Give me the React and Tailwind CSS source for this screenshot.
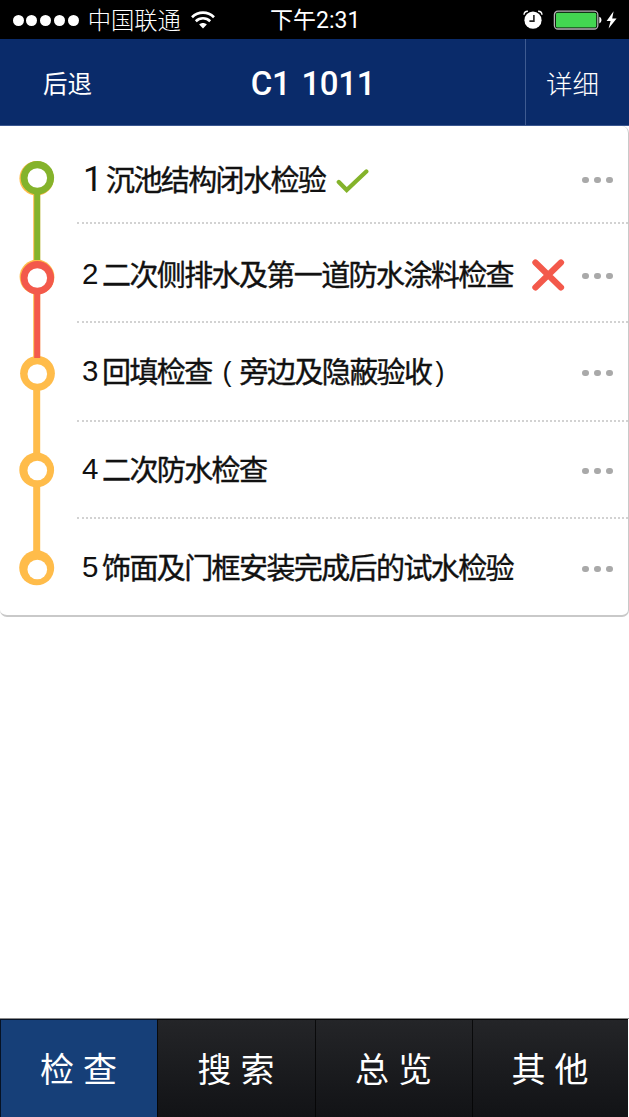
import clsx from 'clsx'

const steps = [
  { no: 1, parts: ['沉池结构闭水检验'], state: 'pass', height: 'h-[97.5px]' },
  { no: 2, parts: ['二次侧排水及第一道防水涂料检查'], state: 'fail', height: 'h-[99px]' },
  { no: 3, parts: ['回填检查', '旁边及隐蔽验收'], height: 'h-[99px]' },
  { no: 4, parts: ['二次防水检查'], height: 'h-[97px]' },
  { no: 5, parts: ['饰面及门框安装完成后的试水检验'], height: 'h-[97.5px]' },
]

const tabs = [
  { name: '检查', active: true, width: 'w-[157px]' },
  { name: '搜索', width: 'w-[158px]' },
  { name: '总览', width: 'w-[157px]' },
  { name: '其他', width: 'w-[156px]' },
]

// ── icons ─────────────────────────────────────────────────────────────────────
function WifiIcon() {
  return (
    <svg className="ml-[10px] mt-px h-[18px] w-[24px]" viewBox="0 0 24 18" fill="none" stroke="#fff">
      <path d="M1 6.2C7.3.2 16.7.2 23 6.2" strokeWidth="2.7" />
      <path d="M4.8 10.2c4.1-3.9 10.3-3.9 14.4 0" strokeWidth="2.6" />
      <path d="M12 17.4l-3.8-3.8c2.1-2 5.5-2 7.6 0z" fill="#fff" stroke="none" />
    </svg>
  )
}

function AlarmIcon() {
  return (
    <svg className="h-[19px] w-[20px]" viewBox="0 0 20 19">
      <circle cx="10" cy="10.2" r="8.6" fill="#fff" />
      <path d="M1 4.7C1.2 2.6 2.8 1.2 4.9 1.3M19 4.7c-.2-2.1-1.8-3.5-3.9-3.4" fill="none" stroke="#fff" strokeWidth="1.4" />
      <path d="M10.9 5v6.1H6.4" fill="none" stroke="#222" strokeWidth="1.6" />
    </svg>
  )
}

function BatteryIcon() {
  return (
    <svg className="ml-[10px] h-[20px] w-[50px]" viewBox="0 0 50 20">
      <rect x="1.4" y="1.2" width="43.4" height="17.8" rx="3.5" fill="#000" stroke="#b5b5b5" strokeWidth="1.3" />
      <rect x="2.9" y="2.8" width="40.4" height="14.6" rx="1.5" fill="#43d651" />
      <path d="M46.3 6.8c2.9.8 2.9 5.8 0 6.6z" fill="#fff" />
    </svg>
  )
}

function BoltIcon() {
  return (
    <svg className="ml-[3px] h-[18px] w-[11px]" viewBox="0 0 11 18">
      <path d="M7.6.3.6 10h4L2.6 17.6 10.6 7.4H6.2z" fill="#fff" />
    </svg>
  )
}

function StateIcon({ state }) {
  if (state === 'pass') {
    return (
      <svg className="mt-[4px] ml-[11px] h-[26px] w-[34px]" viewBox="0 0 34 26">
        <path d="M2.8 14l7.9 8L30.3 3.5" fill="none" stroke="#84b32b" strokeWidth="4.3" strokeLinecap="round" />
      </svg>
    )
  }
  if (state === 'fail') {
    return (
      <svg className="mt-px ml-[18px] h-[32px] w-[34px]" viewBox="0 0 34 32">
        <path d="M4.4 3.6l25.6 24.8M30 3.6L4.4 28.4" fill="none" stroke="#f3594b" strokeWidth="6.2" strokeLinecap="round" />
      </svg>
    )
  }
  return null
}

// ── timeline ──────────────────────────────────────────────────────────────────
function Timeline() {
  return (
    <svg className="h-[490px] w-[77px] shrink-0" viewBox="0 0 77 490">
      {/* amber base line */}
      <path d="M36.7 52v390" stroke="#ffbc4a" strokeWidth="7" />
      <g fill="#ffbc4a">
        <circle cx="36.6" cy="52.3" r="17.2" />
        <circle cx="37" cy="151" r="17.4" />
        <circle cx="37.5" cy="247.3" r="17.4" />
        <circle cx="36.7" cy="344" r="17.4" />
        <circle cx="36.7" cy="441.8" r="17.5" />
      </g>
      {/* finished part */}
      <path d="M37.2 52v82" stroke="#84b32b" strokeWidth="6" />
      <path d="M37.2 152v80" stroke="#f3594b" strokeWidth="6" />
      <circle cx="37.4" cy="51.8" r="16.7" fill="#84b32b" />
      <circle cx="37.4" cy="151.8" r="16.7" fill="#f3594b" />
      <g fill="#fff">
        <circle cx="37.3" cy="52" r="9.8" />
        <circle cx="37.3" cy="152" r="9.8" />
        <circle cx="37.3" cy="248" r="9.8" />
        <circle cx="37.3" cy="344.5" r="9.8" />
        <circle cx="37.3" cy="443.5" r="9.8" />
      </g>
    </svg>
  )
}

function MoreDots() {
  return (
    <button className="mr-[15px] ml-auto flex gap-[5px] pt-[3px]">
      <span className="h-[6px] w-[7px] rounded-full bg-[#a9a9a9]" />
      <span className="h-[6px] w-[7px] rounded-full bg-[#a9a9a9]" />
      <span className="h-[6px] w-[7px] rounded-full bg-[#a9a9a9]" />
    </button>
  )
}

function StepText({ children }) {
  return <span className="pt-[5px] text-[29px] tracking-[-1.6px] [-webkit-text-stroke:0.4px_#111]">{children}</span>
}

function StepRow({ step, last }) {
  const [name, note] = step.parts
  return (
    <li
      className={clsx(
        'flex items-center whitespace-nowrap',
        step.height,
        step.no === 1 && 'pt-[10px]',
        step.no === 2 && 'pt-[4px]',
        !last && 'border-b-2 border-dotted border-[#d2d2d2]',
      )}
    >
      {step.no === 1 ? (
        <span className="w-[29px] shrink-0 pt-[2px] pl-[6px] font-['Roboto'] text-[35px]">1</span>
      ) : (
        <span className="w-[25px] shrink-0 pl-[5px] text-[29.5px]">{step.no}</span>
      )}
      <StepText>{name}</StepText>
      {note && (
        <>
          <span className="ml-[11px] w-[17px] pt-[2px] text-[27px]">(</span>
          <StepText>{note}</StepText>
          <span className="ml-[4px] pt-[2px] text-[27px]">)</span>
        </>
      )}
      <StateIcon state={step.state} />
      <MoreDots />
    </li>
  )
}

// ── page ──────────────────────────────────────────────────────────────────────
export default function App() {
  return (
    <div className="flex h-[1117px] w-[629px] flex-col overflow-hidden bg-white font-['Liberation_Sans','Noto_Sans_CJK_SC',sans-serif] text-[#111]">
      {/* Status bar */}
      <div className="grid h-[39px] shrink-0 grid-cols-[259px_113px_1fr] items-center bg-black text-white">
        <div className="flex items-center pl-[12.5px]">
          <div className="flex gap-[2.8px] pt-[2px]">
            {[1, 2, 3, 4, 5].map(i => <span key={i} className="size-[11px] rounded-full bg-white" />)}
          </div>
          <span className="ml-[9px] pt-[5px] text-[23.3px] leading-none font-light whitespace-nowrap">中国联通</span>
          <WifiIcon />
        </div>
        <div className="pt-[4px] pl-[11px] font-['Roboto','Noto_Sans_CJK_SC',sans-serif] text-[23px] whitespace-nowrap">下午2:31</div>
        <div className="flex items-center justify-end pr-[12px]">
          <AlarmIcon />
          <BatteryIcon />
          <BoltIcon />
        </div>
      </div>

      {/* Nav bar */}
      <header className="grid h-[87px] shrink-0 grid-cols-[104px_1fr_104px] border-b border-[#3b5790] bg-[#0a2b6a] text-white">
        <button className="pt-[6px] pl-[31px] text-[24.5px]">后退</button>
        <h1 className="flex items-center justify-center pt-[3px] pr-[3px] font-['Roboto'] text-[33px] font-medium tracking-[-0.3px] [word-spacing:3px]">
          C1 1011
        </h1>
        <button className="border-l border-[#3f5b91] pt-[7px] pr-[10px] text-[26.5px] font-light">详细</button>
      </header>

      {/* Steps */}
      <main className="flex-1">
        <section className="flex h-[491px] w-full rounded-[7px] border-r border-b-2 border-[#c9c9c9] bg-white">
          <Timeline />
          <ol className="flex-1">
            {steps.map((s, i) => <StepRow key={s.no} step={s} last={i === steps.length - 1} />)}
          </ol>
        </section>
      </main>

      {/* Tab bar */}
      <nav className="flex h-[99px] shrink-0 border-t border-[#8a8a8a] pr-px">
        {tabs.map(t => (
          <button
            key={t.name}
            className={clsx(
              'border-t border-l border-black/70 pt-[4px] pl-[8px] text-[34px] tracking-[9px] text-white',
              t.width,
              t.active ? 'bg-[#163f78]' : 'bg-linear-to-b from-[#242528] to-[#121316]',
            )}
          >
            {t.name}
          </button>
        ))}
      </nav>
    </div>
  )
}
